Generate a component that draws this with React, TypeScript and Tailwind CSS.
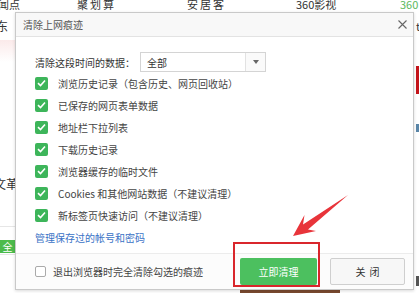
import React from 'react';

const font = { fontFamily: '"Noto Sans CJK SC", "Noto Sans", sans-serif' };

const items = [
  '浏览历史记录（包含历史、网页回收站）',
  '已保存的网页表单数据',
  '地址栏下拉列表',
  '下载历史记录',
  '浏览器缓存的临时文件',
  'Cookies 和其他网站数据（不建议清理）',
  '新标签页快速访问（不建议清理）',
];

const GreenCheck: React.FC = () => (
  <span className="flex h-[13px] w-[13px] shrink-0 items-center justify-center rounded-[2px] bg-[#3db55a]">
    <svg width="9" height="8" viewBox="0 0 9 8">
      <path d="M1 4.2 L3.5 6.5 L8 1.5" fill="none" stroke="#fff" strokeWidth="1.6" />
    </svg>
  </span>
);

const Backdrop: React.FC = () => (
  <div className="absolute inset-0 bg-white text-[#333]">
    <div className="absolute left-0 right-0 top-[-2px] flex h-[12px] text-[11px] leading-[12px]">
      <span className="absolute left-[-13px]">新闻点</span>
      <span className="absolute left-[77px] tracking-[2px]">聚划算</span>
      <span className="absolute left-[187px] tracking-[2px]">安居客</span>
      <span className="absolute left-[296px]">360影视</span>
      <span className="absolute left-[400px] text-[#5cb85c]">360</span>
    </div>
    <span className="absolute left-[-4px] top-[19px] text-[12px] leading-[14px]">东</span>
    <div className="absolute left-0 top-[40px] h-[22px] w-[15px] bg-gradient-to-b from-[#fbeaea] to-white" />
    <span className="absolute left-[-6px] top-[177px] text-[12px] leading-[14px]">文革</span>
    <div className="absolute left-0 top-[226px] h-px w-[15px] bg-[#e6e6e6]" />
    <span className="absolute left-0 top-[240px] flex h-[13px] w-[15px] items-center justify-center bg-[#4cbb4c] text-[10px] leading-none text-white">全</span>
    <div className="absolute left-0 top-[254px] h-px w-[15px] bg-[#e6e6e6]" />
    <span className="absolute left-[416px] top-[20px] text-[11px] leading-[12px]">t</span>
    <div className="absolute left-[416px] top-[66px] h-[28px] w-[4px] bg-[#c4141a]" />
    <div className="absolute left-[416px] top-[124px] h-[8px] w-[3px] bg-[#5a86a8]" />
    <div className="absolute left-[416px] top-[276px] h-[10px] w-[3px] bg-[#555]" />
    <div className="absolute left-[240px] top-[290px] h-[3px] w-[100px] bg-[#7a4a30]" />
  </div>
);

const Arrow: React.FC = () => (
  <svg className="pointer-events-none absolute left-0 top-0" width="419" height="293">
    <polygon
      points="348,195 308,229.5 316,231 293,236 304.5,215 303,224.5"
      fill="#e8343a"
    />
  </svg>
);

export default function App() {
  return (
    <div className="relative h-[293px] w-[419px] overflow-hidden" style={font}>
      <Backdrop />

      <div className="absolute left-[15px] top-[12px] flex h-[278px] w-[399px] flex-col border border-[#c9c9c9] bg-white shadow-[0_1px_3px_rgba(0,0,0,0.15)]">
        <div className="flex h-[24px] shrink-0 items-center border-b border-[#e3e3e3] bg-[#f8f8f8] pl-[7px] pr-[6px]">
          <span className="text-[10px] text-[#555]">清除上网痕迹</span>
          <svg className="ml-auto" width="9" height="9" viewBox="0 0 9 9">
            <path d="M0.5 0.5 L8.5 8.5 M8.5 0.5 L0.5 8.5" stroke="#666" strokeWidth="1.1" />
          </svg>
        </div>

        <div className="flex flex-col pl-[19px] pt-[15px]">
          <div className="flex h-[20px] items-center">
            <span className="w-[105px] text-[10px] text-[#333]">清除这段时间的数据：</span>
            <div className="flex h-[20px] w-[126px] items-center border border-[#d4d4d4]">
              <span className="flex-1 pl-[6px] text-[10px] text-[#333]">全部</span>
              <div className="flex h-full w-[20px] items-center justify-center border-l border-[#e2e2e2] bg-[#fafafa]">
                <span className="h-0 w-0 border-x-[3px] border-t-[4px] border-x-transparent border-t-[#666]" />
              </div>
            </div>
          </div>

          {items.map((t) => (
            <div key={t} className="flex h-[22px] items-center gap-[10px]">
              <GreenCheck />
              <span className="text-[10px] text-[#444]">{t}</span>
            </div>
          ))}

          <div className="flex h-[22px] items-center">
            <span className="text-[10px] text-[#3a72c6]">管理保存过的帐号和密码</span>
          </div>
        </div>

        <div className="mt-auto flex h-[36px] items-center border-t border-[#ececec] bg-[#fcfcfc] pl-[19px] pr-[8px]">
          <span className="h-[11px] w-[11px] rounded-[2px] border border-[#aaa] bg-white" />
          <span className="ml-[7px] text-[10px] text-[#444]">退出浏览器时完全清除勾选的痕迹</span>
          <div className="ml-auto flex gap-[13px]">
            <button className="h-[27px] w-[77px] rounded-[2px] bg-[#4cc05f] text-[10px] text-white">立即清理</button>
            <button className="h-[27px] w-[75px] rounded-[2px] border border-[#cfcfcf] bg-[#f7f7f7] pl-[4px] text-[10px] tracking-[4px] text-[#333]">关闭</button>
          </div>
        </div>
      </div>

      <div className="pointer-events-none absolute left-[233px] top-[242px] h-[45px] w-[87px] border-2 border-[#d9262c]" />
      <Arrow />
    </div>
  );
}
